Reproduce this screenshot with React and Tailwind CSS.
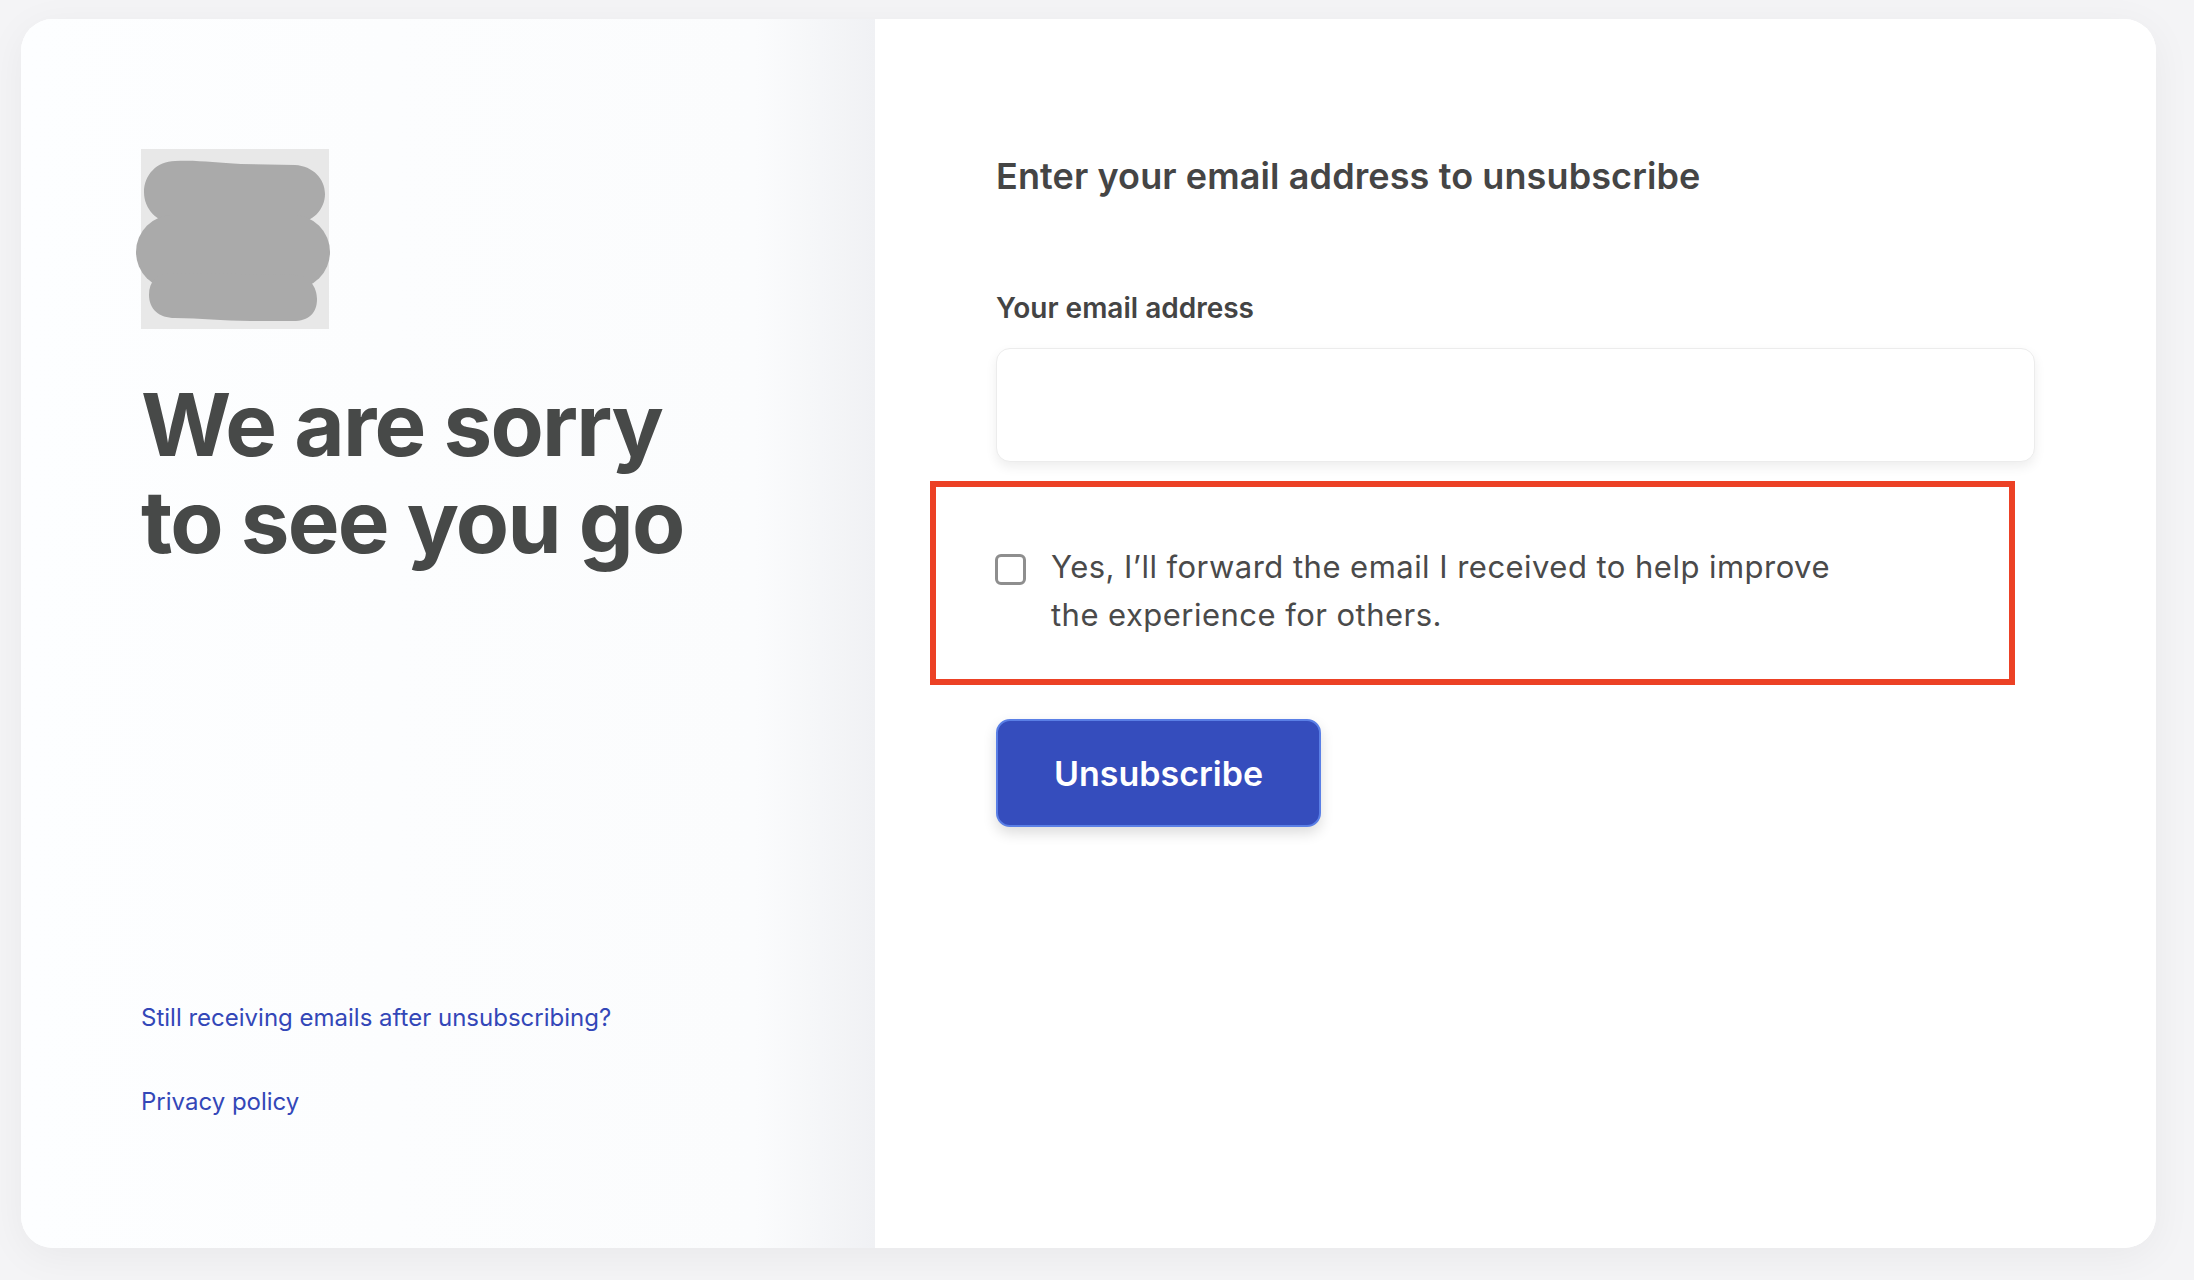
import { useState } from 'react';

const Logo = () => (
    <div className="w-[188px] h-[180px] bg-[#e8e8e8]">
        <svg width="188" height="180" viewBox="0 0 188 180" className="overflow-visible">
            <path d="M34 12 C60 11 75 14 100 15 L154 16 C172 17 184 30 184 45 C184 60 172 74 154 74 L34 74 C16 74 3 60 3 43 C3 26 16 12 34 12 Z" fill="#aaaaaa" />
            <rect x="-5" y="66" width="194" height="74" rx="37" fill="#aaaaaa" />
            <path d="M30 124 L154 126 C168 126 176 138 176 150 C176 164 168 172 152 172 L110 172 C80 172 60 169 34 169 C18 169 8 160 8 146 C8 132 16 124 30 124 Z" fill="#aaaaaa" />
        </svg>
    </div>
);

const App = () => {
    const [email, setEmail] = useState('');
    const [forward, setForward] = useState(false);

    return (
        <div className="min-h-screen bg-[#f4f4f6] pt-[19px] pl-[21px] font-['Inter',sans-serif]">
            <div className="w-[2135px] h-[1229px] flex rounded-[32px] overflow-hidden bg-white shadow-[0_8px_40px_rgba(0,0,0,0.05)]">
                {/* left side */}
                <div className="w-[854px] flex flex-col pl-[120px] pt-[130px] pb-[130px] bg-[linear-gradient(to_right,#fdfeff_0%,#fbfcfd_86%,#f0f1f4_100%)]">
                    <Logo />
                    <h1 className="mt-[47px] text-[87px] leading-[97px] font-bold tracking-[-0.02em] text-[#474948]">
                        We are sorry
                        <br />
                        to see you go
                    </h1>
                    <div className="mt-auto flex flex-col gap-[52px] text-[24px] leading-[32px] text-[#3347b8]">
                        <a href="#" className="w-fit">Still receiving emails after unsubscribing?</a>
                        <a href="#" className="w-fit">Privacy policy</a>
                    </div>
                </div>

                {/* right side */}
                <div className="flex-1 bg-white px-[121px] pt-[135px]">
                    <h2 className="text-[36px] leading-[44px] font-semibold tracking-[0.003em] text-[#454545]">
                        Enter your email address to unsubscribe
                    </h2>
                    <form onSubmit={(e) => e.preventDefault()}>
                        <label htmlFor="email" className="block mt-[94px] text-[28px] leading-[32px] font-semibold text-[#444444]">
                            Your email address
                        </label>
                        <input
                            id="email"
                            type="email"
                            value={email}
                            onChange={(e) => setEmail(e.target.value)}
                            className="mt-[24px] w-full h-[114px] px-6 text-[28px] rounded-[14px] border border-[#ececec] bg-white shadow-[0_5px_12px_rgba(0,0,0,0.07)] outline-none"
                        />
                        <div className="mt-[19px] -ml-[66px] w-[1085px] border-[6px] border-[#ec4125] pl-[59px] pt-[56px] pb-[40px]">
                            <label className="flex items-start gap-[25px] cursor-pointer">
                                <span
                                    onClick={() => setForward(!forward)}
                                    className={`mt-[11px] w-[31px] h-[31px] shrink-0 rounded-[6px] border-[3px] border-[#8e8e8e] ${forward ? 'bg-[#354dbd]' : 'bg-white'}`}
                                />
                                <span className="max-w-[800px] text-[31px] leading-[48px] tracking-[0.015em] text-[#4a4a4a]">
                                    Yes, I’ll forward the email I received to help improve the experience for others.
                                </span>
                            </label>
                        </div>
                        <button
                            type="submit"
                            className="mt-[34px] w-[325px] h-[108px] rounded-[14px] bg-[#354dbd] border-2 border-[#5a7fe6] text-white text-[34px] font-semibold shadow-[0_6px_14px_rgba(0,0,0,0.14)]"
                        >
                            Unsubscribe
                        </button>
                    </form>
                </div>
            </div>
        </div>
    );
};

export default App;
